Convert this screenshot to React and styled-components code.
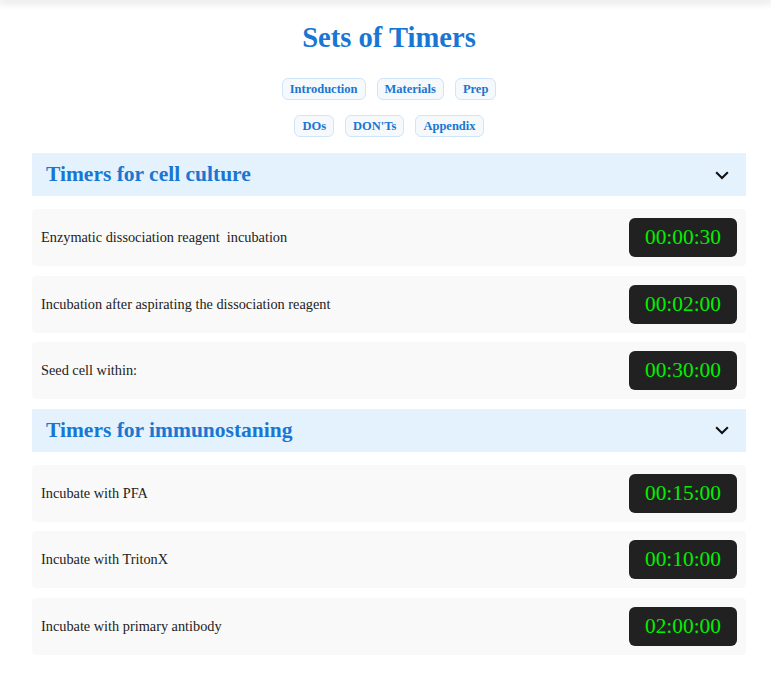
import React from "react"
import styled, { createGlobalStyle } from "styled-components"

const GlobalStyle = createGlobalStyle`
    html, body {
        margin: 0;
        padding: 0;
        background: #ffffff;
        font-family: "Liberation Serif", "Times New Roman", serif;
    }
`

const TopShade = styled.div`
    height: 0;
    box-shadow: 0 0 8px 2px rgba(0, 0, 0, 0.18);
`

const Page = styled.div`
    padding: 22px 25px 30px 32px;
`

const Title = styled.h1`
    margin: 0;
    text-align: center;
    color: #1976d2;
    font-size: 28.6px;
    line-height: 32px;
    font-weight: bold;
`

const Nav = styled.nav`
    margin-top: 24px;
    display: flex;
    flex-direction: column;
    gap: 15px;
    margin-bottom: 16px;
`

const NavRow = styled.div`
    display: flex;
    justify-content: center;
    gap: 11px;
`

const NavButton = styled.button`
    font-family: "Liberation Serif", "Times New Roman", serif;
    font-weight: bold;
    font-size: 12.5px;
    line-height: 14px;
    color: #1976d2;
    background: #f6f9fc;
    border: 1px solid #cfe5fa;
    border-radius: 6px;
    padding: 3px 7px 3px;
    height: 22px;
    cursor: pointer;
`

const SectionHeader = styled.div`
    display: flex;
    align-items: center;
    justify-content: space-between;
    height: 43px;
    padding: 0 11px 0 14px;
    background: #e3f2fd;
    margin-bottom: 13px;
`

const SectionTitle = styled.h2`
    margin: 0;
    color: #1976d2;
    font-size: 21.5px;
    font-weight: bold;
`

const Row = styled.div`
    display: flex;
    align-items: center;
    justify-content: space-between;
    height: 57px;
    box-sizing: border-box;
    padding: 0 9px;
    background: #f9f9f9;
    border-radius: 4px;
    margin-bottom: 9.5px;
`

const Label = styled.span`
    font-size: 14.3px;
    color: #222222;
    white-space: pre;
`

const Clock = styled.div`
    background: #212121;
    color: #00f000;
    border-radius: 6px;
    font-size: 21.4px;
    line-height: 25px;
    padding: 7px 16px;
`

const Chevron = () => (
    <svg width="26" height="26" viewBox="0 0 24 24" fill="none" stroke="#111" strokeWidth="1.9">
        <path d="M6.6 9.4 12 14.8l5.4-5.4" />
    </svg>
)

const sections = [
    {
        title: "Timers for cell culture",
        timers: [
            ["Enzymatic dissociation reagent  incubation", "00:00:30"],
            ["Incubation after aspirating the dissociation reagent", "00:02:00"],
            ["Seed cell within:", "00:30:00"],
        ],
    },
    {
        title: "Timers for immunostaning",
        timers: [
            ["Incubate with PFA", "00:15:00"],
            ["Incubate with TritonX", "00:10:00"],
            ["Incubate with primary antibody", "02:00:00"],
        ],
    },
]

const App = () => (
    <>
        <GlobalStyle />
        <TopShade />
        <Page>
            <Title>Sets of Timers</Title>
            <Nav>
                <NavRow>
                    <NavButton>Introduction</NavButton>
                    <NavButton>Materials</NavButton>
                    <NavButton>Prep</NavButton>
                </NavRow>
                <NavRow>
                    <NavButton>DOs</NavButton>
                    <NavButton>DON'Ts</NavButton>
                    <NavButton>Appendix</NavButton>
                </NavRow>
            </Nav>
            {sections.map((s) => (
                <section key={s.title}>
                    <SectionHeader>
                        <SectionTitle>{s.title}</SectionTitle>
                        <Chevron />
                    </SectionHeader>
                    {s.timers.map(([label, time]) => (
                        <Row key={label}>
                            <Label>{label}</Label>
                            <Clock>{time}</Clock>
                        </Row>
                    ))}
                </section>
            ))}
        </Page>
    </>
)

export default App
